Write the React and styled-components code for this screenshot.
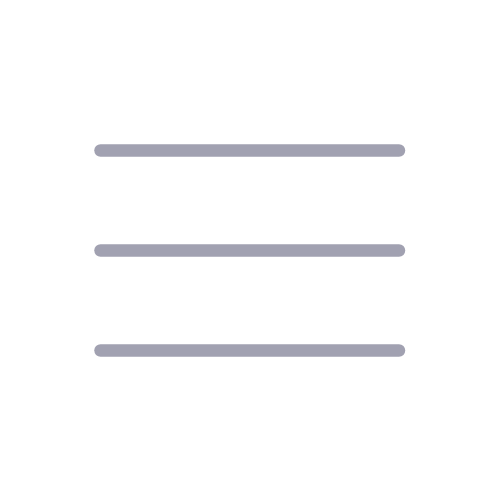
import React from "react";
import styled, { createGlobalStyle } from "styled-components";

const Global = createGlobalStyle`
  html, body { margin: 0; padding: 0; background: #ffffff; }
`;

const Page = styled.div`
  width: 500px;
  height: 500px;
  display: flex;
  align-items: center;
  justify-content: center;
`;

const Icon = styled.svg`
  display: block;
  width: 500px;
  height: 500px;
`;

export default function App() {
  return (
    <>
      <Global />
      <Page>
        <Icon viewBox="0 0 500 500" fill="none" stroke="#a1a1b1" strokeWidth="12.5" strokeLinecap="round">
          <line x1="100.5" y1="150.5" x2="399" y2="150.5" />
          <line x1="100.5" y1="250.5" x2="399" y2="250.5" />
          <line x1="100.5" y1="350.5" x2="399" y2="350.5" />
        </Icon>
      </Page>
    </>
  );
}
